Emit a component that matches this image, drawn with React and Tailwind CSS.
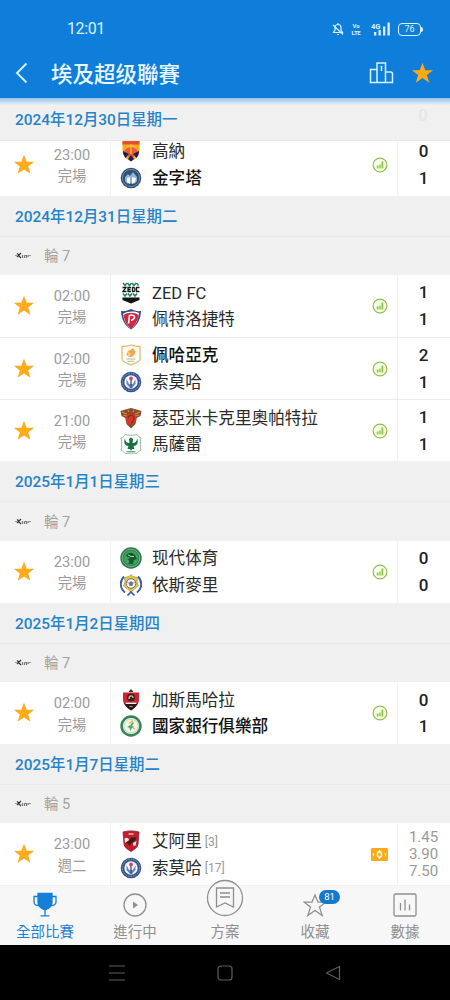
import clsx from "clsx"

const STAR =
  "M11 0.800l2.700 7h7.500l-6 4.600 2.200 7.400L11 15.400l-6.400 4.400 2.200-7.400-6-4.600h7.500z"

function Svg({size = 22, className, children}) {
  return (
    <svg
      width={size}
      height={size}
      viewBox="0 0 22 22"
      fill="none"
      className={clsx("shrink-0", className)}
    >
      {children}
    </svg>
  )
}

// Simplified club badges, all drawn on a 22x22 grid
const crests = {
  haras: (
    <>
      <path d="M2.500 1h17v10c0 5-4 8-8.500 10.500C6.500 19 2.500 16 2.500 11z" fill="#f7a823" />
      <path d="M2.500 1h17v3.500h-17z" fill="#e2502d" />
      <path d="M4 11l7-6 7 6-7 9z" fill="#ef5a35" />
      <path d="M3 11l6 3-3.500 4C4 16 3 14 3 11zM19 11l-6 3 3.500 4c1.500-2 2.500-4 2.500-7zM11 15l3 4-3 2.500L8 19z" fill="#1b1f52" />
      <path d="M11 4v10M7 7l4-1 4 1" stroke="#f9c12f" strokeWidth="1.300" />
    </>
  ),
  pyramids: (
    <>
      <circle cx="11" cy="11" r="10.300" fill="#2f4f73" />
      <circle cx="11" cy="11" r="8.600" stroke="#7f9dbb" strokeWidth=".8" />
      <path d="M5 10l3-3 2 2 3-4 4 5v4l-2 2.500H7L5 14z" fill="#8fb3d6" />
      <path d="M7 11l3-1v7l-3-2zM12 10l4 1-1 4-3 2z" fill="#fff" />
    </>
  ),
  zed: (
    <>
      <path d="M3 1l2 2.500L7 1M7.500 1l2 2.500 2-2.500M12 1l2 2.500L16 1M16.500 1l2 2.500" stroke="#22835a" strokeWidth="1.500" />
      <path d="M2.500 5.500H6L3 9.500h3.500M11 5.500H8v4h3M8 7.500h2.500M12.500 5.500v4h1c2 0 2-4 0-4zM19.500 5.500h-3v4h3" stroke="#151b1a" strokeWidth="1.300" />
      <path d="M3 11.500l2 2.500 2-2.500M8 11.500l2 2.500 2-2.500M13 11.500l2 2.500 2-2.500" stroke="#22835a" strokeWidth="1.500" />
      <path d="M2.500 15.500h17V18L11 21.500 2.500 18z" fill="#101413" />
    </>
  ),
  petrojet: (
    <>
      <path d="M1 3c4 .5 7-.5 10-2 3 1.500 6 2.500 10 2-.5 8-3 14-10 18.500C4 17 1.500 11 1 3z" fill="#2b4f92" />
      <path d="M3 6c5-3 11-3 16-1-1 8-3 12-8 15.500C6 17 4 13 3 6z" fill="#fff" />
      <path d="M3.500 7c4-3 11-3 15 0-.5 6-3.500 10-7.500 14C7 17 4.500 14 3.500 7z" fill="#d8263c" />
      <path d="M8.500 15.500l1-8c5-2 7.500 3 1.500 5" stroke="#fff" strokeWidth="1.600" />
    </>
  ),
  pharco: (
    <>
      <path d="M2 2.500c4 0 6-.5 9-1.500 3 1 5 1.500 9 1.500V15c0 3-4 4-9 6-5-2-9-3-9-6z" fill="#fffdf8" stroke="#e8bb6d" strokeWidth="1.300" />
      <path d="M6.500 11c0-3 2-5 4.500-5 0-2 4-2 3 0l1.500 1c-.5 5-4 7-7 5.500z" fill="#f4a646" />
      <path d="M7 8l3 2-2 2" stroke="#fbd49b" strokeWidth="1.500" />
      <path d="M6.500 15h9M7.500 17.200h7" stroke="#b9b3a8" strokeWidth="1.100" />
    </>
  ),
  smouha: (
    <>
      <circle cx="11" cy="11" r="10.300" fill="#36548b" />
      <circle cx="11" cy="11" r="8.600" stroke="#8fa3c8" strokeWidth=".9" strokeDasharray="1.500 1" />
      <circle cx="11" cy="11" r="6.700" fill="#f4f6fa" />
      <path d="M6.500 8v5l3.500 4h2l3.500-4V8l-2.500 5h-4z" fill="#6c84b2" />
      <path d="M11 9v8" stroke="#36548b" strokeWidth="1.300" />
      <circle cx="11" cy="7.500" r="1.900" fill="#d4476c" />
    </>
  ),
  cleopatra: (
    <>
      <path d="M0.500 4l5-1.500L11 1l5.500 1.500 5 1.500-1 5-4 2-1 6-4.500 4.500L6.500 17l-1-6-4-2z" fill="#8a4a32" />
      <path d="M2 5l5 2M3 8l4 1M20 5l-5 2M19 8l-4 1M8 3l1 2M14 3l-1 2" stroke="#d98b39" strokeWidth="1.200" />
      <circle cx="11" cy="12" r="5.500" fill="#cf3a29" />
      <path d="M8 11c1-4 6-3 6 0s-2 5-3 5" stroke="#8b2a1c" strokeWidth="1.200" />
    </>
  ),
  masry: (
    <>
      <path d="M5 1.500c3 1 9 1 12 0 1 2 2.500 3 4 3.500-1 4-1 9 0 12-2 1-3 2-4 3.500-4-.5-8-.5-12 0C4 19 3 18 1 17c1-3 1-8 0-12 2-.5 3-1.500 4-3.500z" fill="#fff" stroke="#8dba9c" strokeWidth="1" />
      <path d="M5 5c0 4 2 5 4.500 5L9 6l2-1.500L13 6l-.5 4C15 10 17 9 17 5c2 5-.5 8-3.500 8l1 3H12l-1 2-1-2H7.500l1-3C5.500 13 3 10 5 5z" fill="#16733f" />
      <path d="M6.500 18.700h9" stroke="#4a9668" />
    </>
  ),
  modern: (
    <>
      <circle cx="11" cy="11" r="10.700" fill="#2c7a47" />
      <circle cx="11" cy="11" r="8.700" stroke="#80b490" strokeWidth="1" />
      <circle cx="11" cy="11" r="7.300" fill="#3fa45c" />
      <path d="M6 9c2-4 6-4 9-1l2 4-3 1-1 4-5 0c2-2 2-4-1-4l3-2z" fill="#135b2d" />
      <path d="M8 8l3 1.500h3" stroke="#a9dcb7" />
    </>
  ),
  ismaily: (
    <>
      <path d="M4 2.500C-.5 7-.5 14 5 18.500M18 2.500C22.500 7 22.500 14 17 18.500" stroke="#3c5c9f" strokeWidth="2" />
      <path d="M11 .5l2 2 4.500 1L17 8l1.500 4-3.500 2.500-4 4-4-4L3.500 12 5 8l-.5-4.500L9 2.500z" fill="#eac638" stroke="#8e8a55" strokeWidth=".6" />
      <circle cx="11" cy="9.500" r="4.800" fill="#f8f6e4" stroke="#54658c" strokeWidth=".9" />
      <path d="M11 7.500l2 1.500-.8 2.500H9.800L9 9zM7 8l1.500.5M15 8l-1.500.5" fill="#6a7699" stroke="#6a7699" strokeWidth=".8" />
      <path d="M7.500 21.500L11 18l3.500 3.500" stroke="#3c5c9f" strokeWidth="1.700" />
    </>
  ),
  gazl: (
    <>
      <path d="M3 3.500h16v7c0 5-4 8-8 11-4-3-8-6-8-11z" fill="#cf2330" />
      <path d="M4 14h14c-1.500 3-4 5.500-7 7.500-3-2-5.500-4.500-7-7.500z" fill="#23191a" />
      <path d="M8.500 3L11 0l2.500 3z" fill="#4a2a20" />
      <path d="M5.500 14.300h11" stroke="#fff" strokeWidth="1.300" />
      <circle cx="11" cy="8.500" r="4" fill="#3c2420" />
      <path d="M9 10c0-4 4-4 4-1" stroke="#d9c08b" strokeWidth="1.300" />
      <path d="M9.500 17.500h3" stroke="#d89b37" />
    </>
  ),
  bank: (
    <>
      <circle cx="11" cy="11" r="9.400" fill="#fff" stroke="#3a8554" strokeWidth="2.600" />
      <circle cx="11" cy="11" r="7" fill="#f3f6ec" stroke="#9cc5a8" strokeWidth=".7" />
      <path d="M7 12l3.500-2 2-3 1.500 1-2 3 2.500 1-2.500 1-2 3-.5-3z" fill="#5aaa6a" />
      <path d="M9.500 8.500L13 5.500M13 13l2 1" stroke="#eab73a" strokeWidth="1.300" />
    </>
  ),
  ahly: (
    <>
      <path d="M3 2c5-1.500 11-1.500 16 0l-1 12c-.5 4-4 5.500-7 7.500-3-2-6.500-3.500-7-7.500z" fill="#c41c2b" stroke="#8c2230" strokeWidth=".8" />
      <path d="M8.500 4h5" stroke="#edc1a0" strokeWidth="1.500" />
      <path d="M4.500 12c4 1 5-2 6-4 2-1 4 0 6-1-1 3-2 5-5 6l-2 3-1-2z" fill="#3a1c1c" />
      <path d="M4.500 8.500c2-1.500 4-.5 4.500 1.500l-4 3zM13 13l3.500-2-1 4.500-2 .5z" fill="#f6eeee" />
    </>
  ),
}

const days = [
  {
    date: "2024年12月30日星期一",
    pinned: true,
    matches: [
      {
        time: "23:00",
        status: "完場",
        home: {name: "高納", crest: "haras", score: 0},
        away: {name: "金字塔", crest: "pyramids", score: 1, winner: true},
      },
    ],
  },
  {
    date: "2024年12月31日星期二",
    round: 7,
    matches: [
      {
        time: "02:00",
        status: "完場",
        home: {name: "ZED FC", crest: "zed", score: 1},
        away: {name: "佩特洛捷特", crest: "petrojet", score: 1},
      },
      {
        time: "02:00",
        status: "完場",
        home: {name: "佩哈亞克", crest: "pharco", score: 2, winner: true},
        away: {name: "索莫哈", crest: "smouha", score: 1},
      },
      {
        time: "21:00",
        status: "完場",
        home: {name: "瑟亞米卡克里奧帕特拉", crest: "cleopatra", score: 1},
        away: {name: "馬薩雷", crest: "masry", score: 1},
      },
    ],
  },
  {
    date: "2025年1月1日星期三",
    round: 7,
    matches: [
      {
        time: "23:00",
        status: "完場",
        home: {name: "现代体育", crest: "modern", score: 0},
        away: {name: "依斯麥里", crest: "ismaily", score: 0},
      },
    ],
  },
  {
    date: "2025年1月2日星期四",
    round: 7,
    matches: [
      {
        time: "02:00",
        status: "完場",
        home: {name: "加斯馬哈拉", crest: "gazl", score: 0},
        away: {name: "國家銀行俱樂部", crest: "bank", score: 1, winner: true},
      },
    ],
  },
  {
    date: "2025年1月7日星期二",
    round: 5,
    matches: [
      {
        time: "23:00",
        status: "週二",
        home: {name: "艾阿里", crest: "ahly", rank: 3},
        away: {name: "索莫哈", crest: "smouha", rank: 17},
        odds: ["1.45", "3.90", "7.50"],
      },
    ],
  },
]

function StatusBar() {
  return (
    <div className="flex h-[58px] items-center justify-between pr-[27px] pl-[67px] text-[#d9f1ff]">
      <span className="text-[16px] leading-none tracking-[-0.4px]">12:01</span>
      <div className="flex items-center">
        <svg width="12" height="13" viewBox="0 0 12 13" fill="none" stroke="currentColor" strokeWidth="1.200">
          <path d="M3 4.500C3 .500 9 .500 9 4.500V7l1.500 2.500h-9L3 7zM6 1V0M5 11.500h2M1 2l10 9.500" />
        </svg>
        <div className="ml-[7px] flex w-[10px] flex-col items-center gap-px text-[6px] leading-[6px] font-bold">
          <span>Vo</span>
          <span className="tracking-[-0.3px]">LTE</span>
        </div>
        <svg width="20" height="14" viewBox="0 0 20 14" className="ml-[10px]">
          <text x="0" y="6.500" fontSize="7.500" fontWeight="700" fill="currentColor">4G</text>
          <path d="M3 10h2.300v3.500H3zM7.500 8h2.300v5.500H7.500zM12 4.500h2.300v9H12zM16.500 .500h2.300v13h-2.300z" fill="currentColor" />
        </svg>
        <div className="ml-[7px] flex h-[13px] w-[23px] items-center justify-center rounded-[4px] border-[1.500px] border-current text-[9px] leading-none">
          76
        </div>
        <div className="h-[5px] w-[2px] rounded-r bg-current" />
      </div>
    </div>
  )
}

function Header() {
  return (
    <header className="h-[98px] shrink-0 bg-[#0f7edb]">
      <StatusBar />
      <div className="flex h-[30px] items-center pr-[16px] pl-[14px]">
        <svg width="14" height="22" viewBox="0 0 14 22" fill="none" stroke="#d9f1ff" strokeWidth="1.900">
          <path d="M12.500 1.500L3 11l9.500 9.500" />
        </svg>
        <h1 className="ml-[23px] flex-1 pt-[3px] text-[21.500px] leading-[30px] font-medium text-[#e9f7ff]">
          埃及超级聯賽
        </h1>
        <svg width="25" height="22" viewBox="0 0 25 22" fill="none" stroke="#d9f1ff" strokeWidth="1.500" className="mr-[17px]">
          <path d="M8 20.500V1h8.500v19.500M8 7.500H4M1.500 9.500v11h22v-8.500a2 2 0 0 0-2-2h-5M1.500 10V7.500H4M12.500 4v5M11.500 4.700l1-.5" />
        </svg>
        <Svg size={23}>
          <path d={STAR} fill="#ffa914" />
        </Svg>
      </div>
    </header>
  )
}

function DateBar({date, pinned}) {
  return (
    <div
      className={clsx(
        "flex shrink-0 items-center border-b border-[#e9e9e9] bg-[#f0f0f0] px-[15px] pt-[3px] text-[15.400px] font-medium text-[#2583c9]",
        pinned ? "relative z-10 h-[42.500px]" : "h-[41px]"
      )}
    >
      {pinned && (
        <div className="absolute inset-x-0 top-0 h-[7px] bg-linear-to-b from-[#8fc3ef] to-[#f0f0f0]" />
      )}
      <span>{date}</span>
      {pinned && (
        <span className="absolute top-[5px] right-[22px] text-[17px] text-[#e6e6e6]">0</span>
      )}
    </div>
  )
}

function RoundBar({round}) {
  return (
    <div className="flex h-[38.200px] shrink-0 items-center bg-[#f0f0f0] pl-[15px] text-[14.500px] text-[#a3a3a3]">
      <svg width="16" height="8" viewBox="0 0 16 8" fill="none" className="mr-[13px]">
        <path d="M0 3.500h2M14 3.500h2" stroke="#999" />
        <path d="M2 1.500l2 1.500-2 2M6 1L3.500 3.500 6 6" stroke="#333" strokeWidth="1.200" />
        <path d="M7.500 3v3M9.500 3.500v2.500M9.500 3.500h2M11.500 3v3M13.200 3v2" stroke="#777" strokeWidth="1.200" />
      </svg>
      <span className="pt-[2px]">輪 {round}</span>
    </div>
  )
}

function Team({team}) {
  return (
    <div className="flex h-[26.500px] items-center">
      <Svg>{crests[team.crest]}</Svg>
      <span
        className={clsx(
          "ml-[10px] pt-[2px] text-[16.600px] leading-6 whitespace-nowrap",
          team.winner ? "font-medium text-[#111]" : "text-[#2b2b2b]"
        )}
      >
        {team.name}
      </span>
      {team.rank && (
        <span className="ml-[3px] pt-[1px] text-[12px] text-[#999]">[{team.rank}]</span>
      )}
    </div>
  )
}

function StatsIcon() {
  return (
    <svg width="16" height="16" viewBox="0 0 16 16" fill="none">
      <circle cx="8" cy="8" r="6.900" fill="#f7fdeb" stroke="#92bd4a" strokeWidth="1.200" />
      <path d="M4.800 8.500h1.700v3H4.800zM7.300 7.500H8.700v4H7.300zM9.500 4.500h1.800v7H9.500z" fill="#8cc63f" />
    </svg>
  )
}

function LotteryIcon() {
  return (
    <svg width="17" height="13" viewBox="0 0 17 13" fill="none">
      <rect width="17" height="13" rx="1" fill="#f7ac18" />
      <path d="M8.500 2v1.500M8.500 9.500V11M2.500 5v3M14.500 5v3" stroke="#fff" strokeWidth="1.200" />
      <ellipse cx="8.500" cy="6.500" rx="2" ry="2.700" stroke="#fff" strokeWidth="1.400" />
    </svg>
  )
}

function MatchRow({match, first, pinned}) {
  const {time, status, home, away, odds} = match
  return (
    <div
      className={clsx(
        "flex h-[62.200px] shrink-0 bg-white",
        !first && "border-t border-[#ececec]",
        pinned && "-mt-[7px]"
      )}
    >
      <div className="flex w-[111px] items-center border-r border-[#f2f2f2] pl-[13px]">
        <Svg size={22}>
          <path d={STAR} fill="#ffab1c" />
        </Svg>
        <div className="flex-1 pt-[2px] pr-[1px] text-center text-[14.300px] leading-[20.500px] text-[#9b9b9b]">
          <div className="text-[14.600px]">{time}</div>
          <div className="pt-px">{status}</div>
        </div>
      </div>
      <div className="flex flex-1 flex-col justify-center pl-[9px]">
        <Team team={home} />
        <Team team={away} />
      </div>
      <div className={clsx("flex items-center", odds ? "w-[26px]" : "w-[25px]")}>
        {odds ? <LotteryIcon /> : <StatsIcon />}
      </div>
      <div className="flex w-[53px] flex-col items-center justify-center border-l border-[#f2f2f2] pr-px">
        {odds
          ? odds.map(odd => (
              <div key={odd} className="text-[15px] leading-[17px] text-[#999]">
                {odd}
              </div>
            ))
          : [home, away].map(team => (
              <div
                key={team.name}
                className="h-[26.500px] text-[17px] leading-[26px] font-medium text-[#222]"
              >
                {team.score}
              </div>
            ))}
      </div>
    </div>
  )
}

function Tab({label, active, children}) {
  return (
    <div
      className={clsx(
        "flex h-full flex-1 flex-col items-center justify-end gap-[5px] pb-px text-[14.500px] leading-[22px]",
        active ? "text-[#1680d8]" : "text-[#8f8f8f]"
      )}
    >
      {children}
      <span>{label}</span>
    </div>
  )
}

function TabBar() {
  return (
    <nav className="relative z-10 flex h-[60px] shrink-0 border-t border-[#f0f0f0] bg-[#f7f7f7]">
      <Tab label="全部比賽" active>
        <svg width="24" height="25" viewBox="0 0 24 25" fill="none" stroke="currentColor" strokeWidth="1.300">
          <path d="M5 1.500h14v9c0 4-3 6-7 7.500-4-1.500-7-3.500-7-7.500z" fill="currentColor" />
          <path d="M5 4.500H1V10c0 2 2 3.500 5 3.500M19 4.500h4V10c0 2-2 3.500-5 3.500M12 18v5.500M7.500 23.800h9" />
        </svg>
      </Tab>
      <Tab label="進行中">
        <svg width="24" height="24" viewBox="0 0 24 24" fill="none" stroke="currentColor" strokeWidth="1.300">
          <circle cx="12" cy="12" r="11" />
          <path d="M10 8.500l5 3.500-5 3.500z" fill="currentColor" stroke="none" />
        </svg>
      </Tab>
      <Tab label="方案">
        <svg width="38" height="38" viewBox="0 0 38 38" fill="none" stroke="currentColor" strokeWidth="1.300" className="shrink-0">
          <circle cx="19" cy="19" r="17.500" fill="#f7f7f7" />
          <path d="M10.500 9h17v19l-8.500-4-8.500 4zM14 14h10M14 18h10" />
        </svg>
      </Tab>
      <Tab label="收藏">
        <div className="relative">
          <svg width="24" height="24" viewBox="0 0 24 24" fill="none" stroke="currentColor" strokeWidth="1.300">
            <path d="M12 2l3 7.200h7.800l-6.300 4.900 2.700 8.400L12 17.500l-7.200 5 2.700-8.400L1.200 9.200H9z" />
          </svg>
          <span className="absolute -top-[3px] left-[16px] flex h-[14px] w-[21px] items-center justify-center rounded-full bg-[#1478cf] text-[9.500px] leading-none text-white">
            81
          </span>
        </div>
      </Tab>
      <Tab label="數據">
        <svg width="24" height="24" viewBox="0 0 24 24" fill="none" stroke="currentColor" strokeWidth="1.300">
          <rect x="1" y="1" width="22" height="22" rx="1.500" />
          <path d="M7.500 10v7.500M12 6.500v11M16.500 11.500v6" />
        </svg>
      </Tab>
    </nav>
  )
}

function SystemNav() {
  return (
    <div className="flex h-[55px] shrink-0 items-center justify-between bg-black px-[109px] text-[#5e5e5e]">
      <svg width="16" height="16" viewBox="0 0 16 16" stroke="currentColor" strokeWidth="1.200">
        <path d="M0 1h16M0 8h16M0 15h16" />
      </svg>
      <svg width="16" height="16" viewBox="0 0 16 16" fill="none" stroke="currentColor" strokeWidth="1.200">
        <rect x="1" y="1" width="14" height="14" rx="3" />
      </svg>
      <svg width="16" height="16" viewBox="0 0 16 16" fill="none" stroke="currentColor" strokeWidth="1.200" strokeLinejoin="round">
        <path d="M14.500 1.500v13L1.500 8z" />
      </svg>
    </div>
  )
}

export default function App() {
  return (
    <div className="flex h-[1000px] w-[450px] flex-col overflow-hidden bg-white font-[Roboto,'Noto_Sans_CJK_TC',sans-serif]">
      <Header />
      <main className="flex min-h-0 flex-1 flex-col overflow-hidden">
        {days.map(day => (
          <section key={day.date} className="flex shrink-0 flex-col">
            <DateBar date={day.date} pinned={day.pinned} />
            {day.round && <RoundBar round={day.round} />}
            {day.matches.map((match, i) => (
              <MatchRow key={match.home.name} match={match} first={i === 0} pinned={day.pinned} />
            ))}
          </section>
        ))}
      </main>
      <TabBar />
      <SystemNav />
    </div>
  )
}
